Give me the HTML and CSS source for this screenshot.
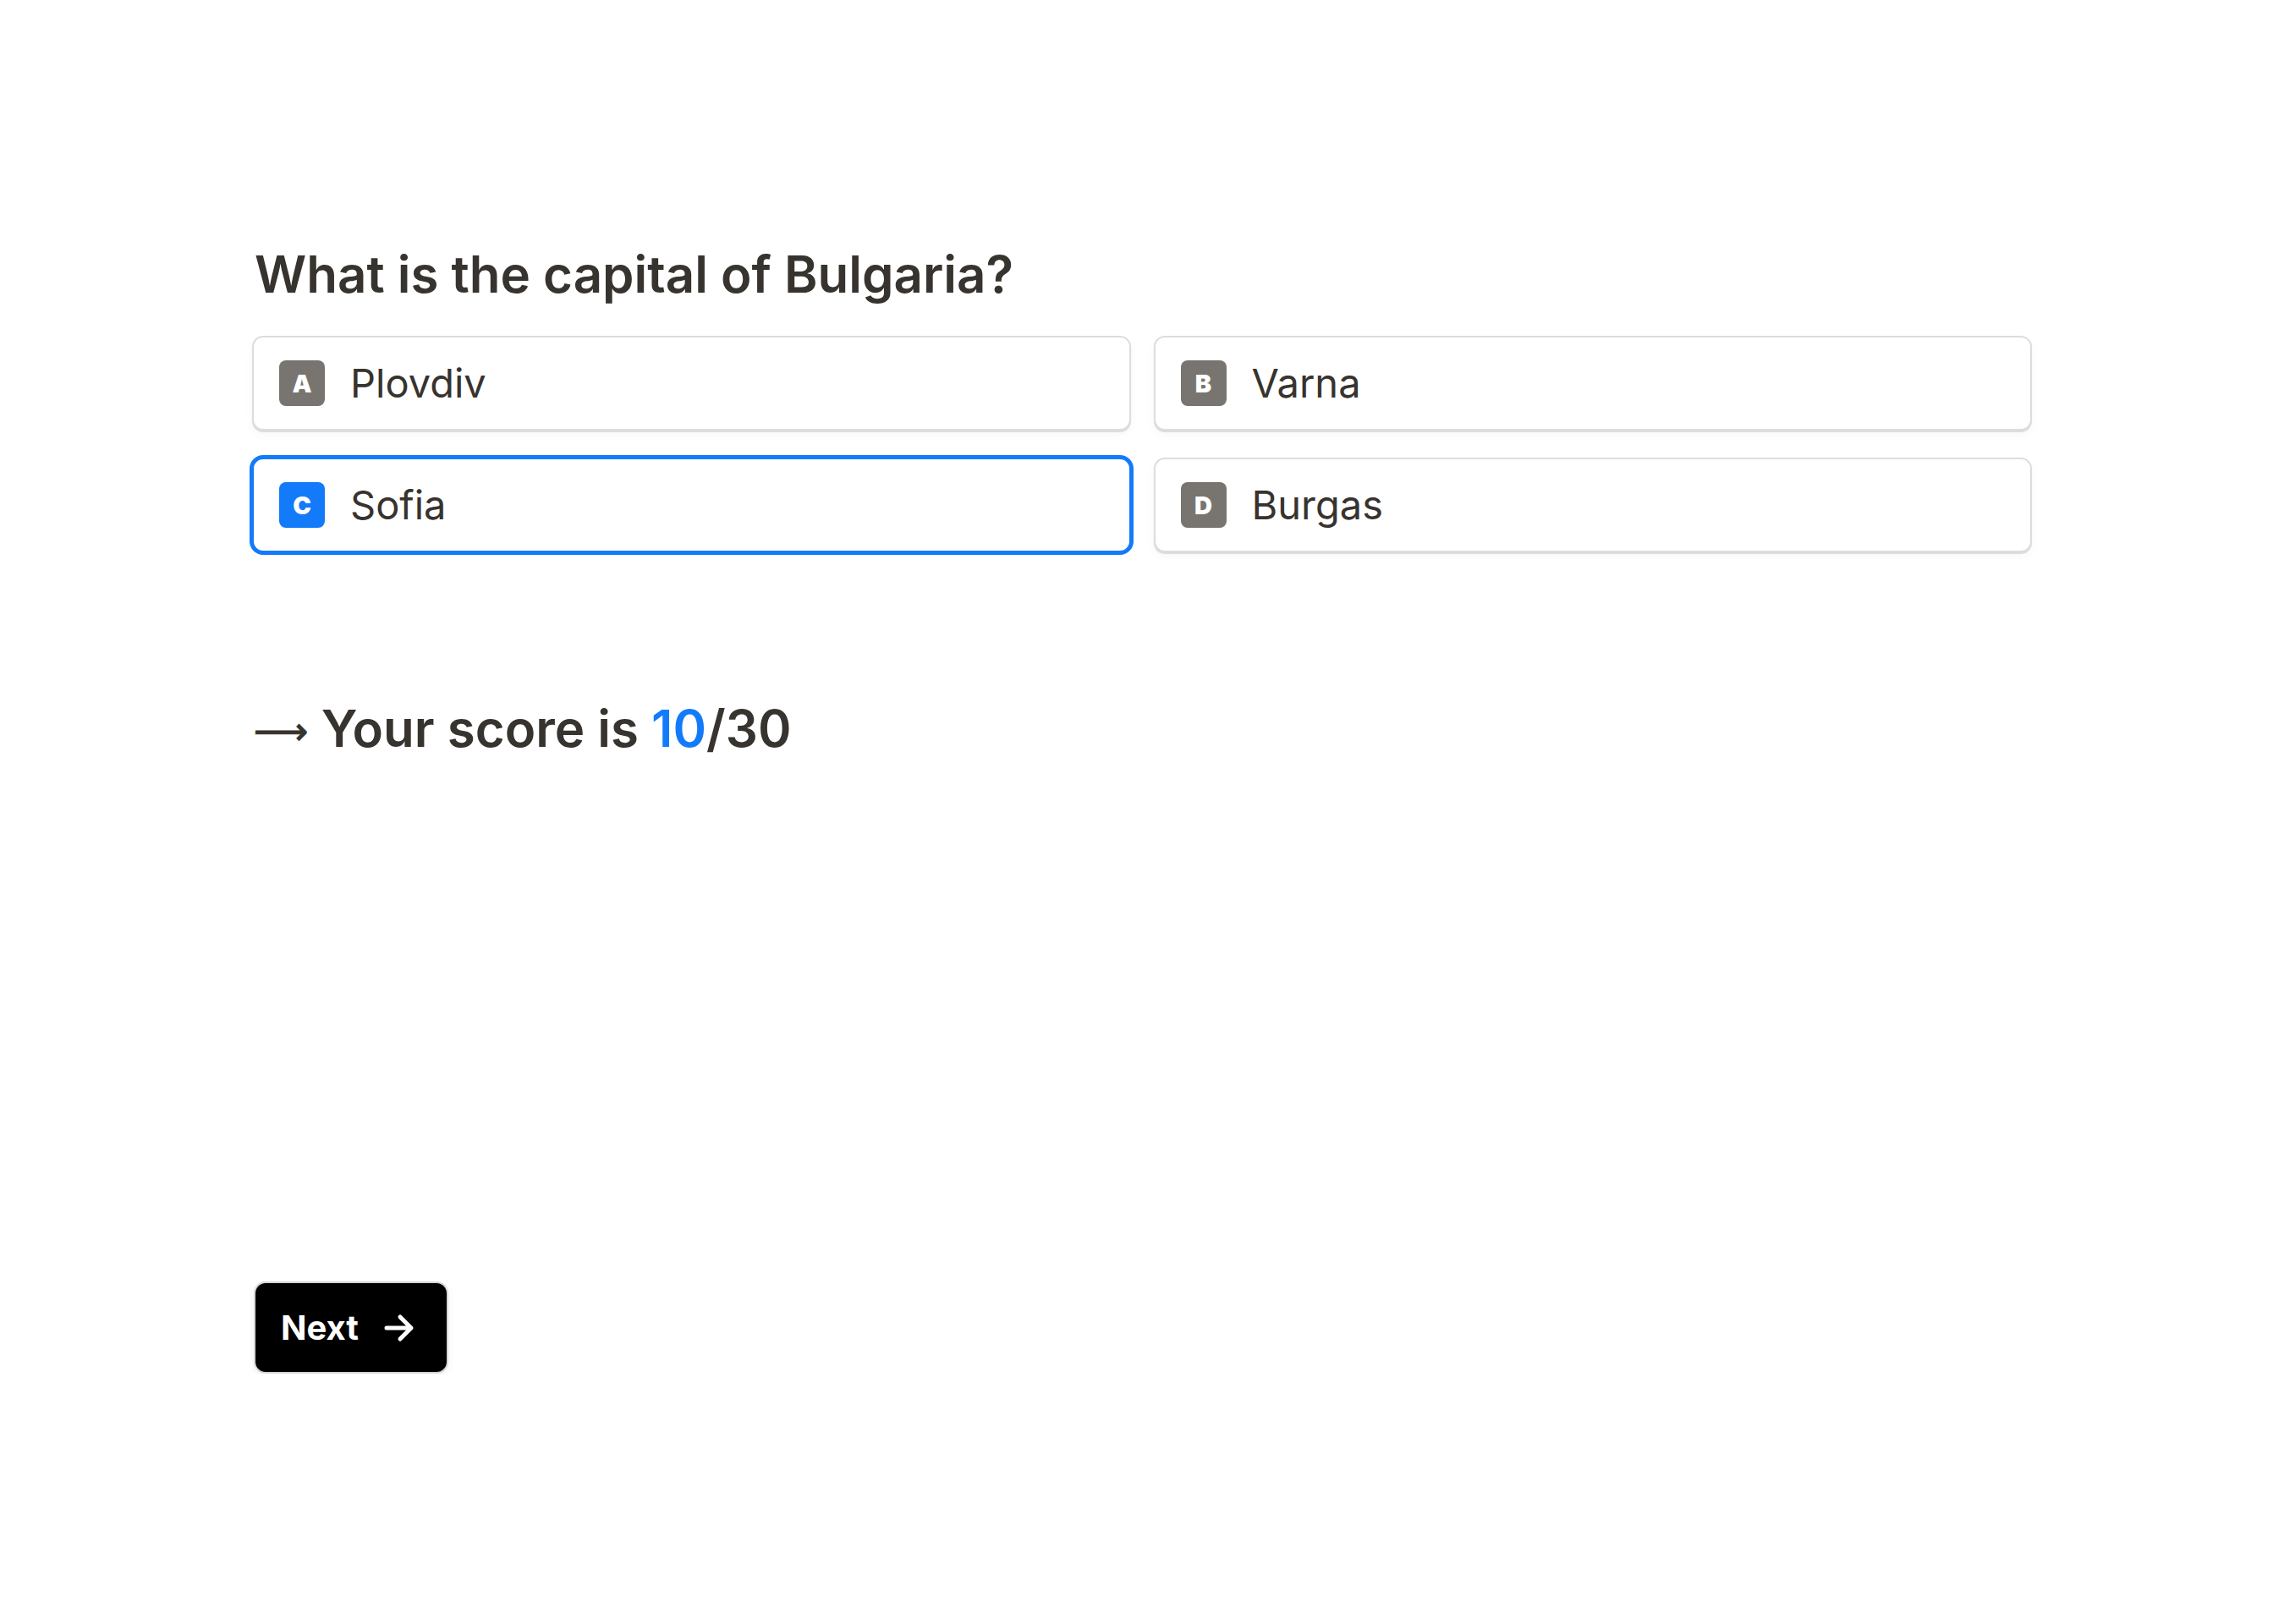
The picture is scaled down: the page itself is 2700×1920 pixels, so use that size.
FILE: index.html
```html
<!DOCTYPE html>
<html lang="en">
<head>
<meta charset="utf-8">
<title>Quiz</title>
<link rel="stylesheet" href="styles.css">
</head>
<body>
<main class="quiz">
  <h1 class="question">What is the capital of Bulgaria?</h1>
  <div class="options">
    <div class="option"><span class="badge">A</span><span class="label">Plovdiv</span></div>
    <div class="option"><span class="badge">B</span><span class="label">Varna</span></div>
    <div class="option selected"><span class="badge">C</span><span class="label">Sofia</span></div>
    <div class="option"><span class="badge">D</span><span class="label">Burgas</span></div>
  </div>
  <p class="score"><span class="arrow">⟶</span> Your score is <span class="points">10</span>/30</p>
  <button class="next" type="button">Next
    <svg class="next-icon" width="36" height="36" viewBox="0 0 36 36" aria-hidden="true"><path d="M3 18h28M19 5l13 13-13 13" fill="none" stroke="#fff" stroke-width="5" stroke-linecap="round" stroke-linejoin="round"/></svg>
  </button>
</main>
</body>
</html>
```
FILE: styles.css
```css
html, body {
  margin: 0;
  padding: 0;
  background: #ffffff;
}
body {
  font-family: Inter, "Noto Sans", sans-serif;
  color: #37332e;
}
.quiz {
  margin-left: 298px;
  width: 2104px;
  padding-top: 288px;
}
.question {
  margin: 0;
  padding-left: 3px;
  font-size: 60px;
  line-height: 72px;
  font-weight: 600;
  color: #37332e;
}
.options {
  margin-top: 37px;
  display: grid;
  grid-template-columns: 1fr 1fr;
  column-gap: 27px;
  row-gap: 32px;
}
.option {
  box-sizing: border-box;
  height: 112px;
  display: flex;
  align-items: center;
  gap: 30px;
  padding: 0 30px;
  border: 2px solid #dedddb;
  border-radius: 13px;
  background: #fff;
  box-shadow: 0 2px 1px rgba(0,0,0,0.12), 0 5px 12px rgba(0,0,0,0.03);
}
.option.selected {
  border-color: #137bfa;
  box-shadow: 0 0 0 3px #137bfa;
}
.badge {
  width: 54px;
  height: 54px;
  flex: none;
  display: flex;
  align-items: center;
  justify-content: center;
  border-radius: 8px;
  background: #787571;
  color: #fff;
  font-size: 29px;
  font-weight: 900;
}
.selected .badge {
  background: #137bfa;
}
.label {
  font-size: 47px;
  line-height: 58px;
  font-weight: 400;
  color: #37332e;
}
.score {
  margin: 172px 0 0;
  padding-left: 2px;
  font-size: 60px;
  line-height: 72px;
  font-weight: 600;
  color: #37332e;
}
.arrow {
  font-family: "DejaVu Sans", sans-serif;
  font-size: 45px;
  font-weight: 400;
  vertical-align: 3px;
  -webkit-text-stroke: 1px #37332e;
}
.points {
  color: #137bfa;
}
.next {
  margin: 614px 0 0 2px;
  box-sizing: border-box;
  width: 230px;
  height: 109px;
  display: flex;
  align-items: center;
  gap: 30px;
  padding: 0 0 0 30px;
  background: #000;
  color: #fff;
  border: 2px solid #d6d6d6;
  border-radius: 14px;
  box-shadow: 0 3px 8px rgba(0,0,0,0.06);
  font-family: Inter, "Noto Sans", sans-serif;
  font-size: 40px;
  font-weight: 700;
  line-height: 48px;
}
.next-icon {
  flex: none;
}
```
